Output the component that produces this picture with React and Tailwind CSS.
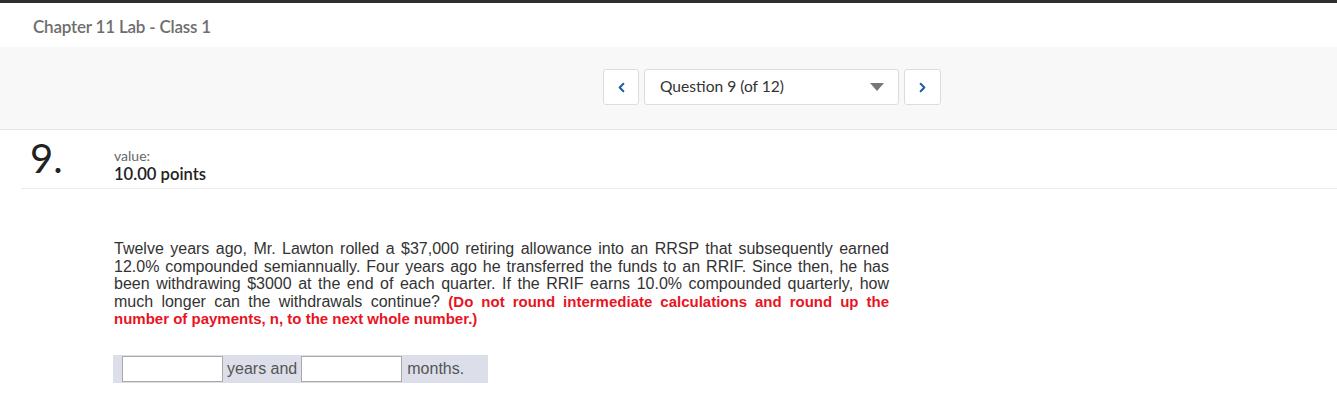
import { ChevronLeft, ChevronRight } from 'lucide-react';

function NavBar() {
  return (
    <div className="flex items-center gap-[5px] pl-[603px] pt-[22px]">
      <button className="flex h-[36px] w-[36px] items-center justify-center rounded-[3px] border border-[#dcdcdc] bg-white text-[#1f5ea8]">
        <ChevronLeft size={15} strokeWidth={3.2} />
      </button>
      <div className="flex h-[36px] w-[255px] items-center justify-between rounded-[3px] border border-[#dcdcdc] bg-white pl-[15px] pr-[14px]">
        <span className="text-[15.6px] text-[#333]">Question 9 (of 12)</span>
        <svg width="14" height="8" viewBox="0 0 14 8">
          <path d="M0 0 L14 0 L7 8 Z" fill="#777" />
        </svg>
      </div>
      <button className="flex h-[36px] w-[37px] items-center justify-center rounded-[3px] border border-[#dcdcdc] bg-white text-[#1f5ea8]">
        <ChevronRight size={15} strokeWidth={3.2} />
      </button>
    </div>
  );
}

export default function App() {
  return (
    <div className="min-h-[415px] bg-white font-['Lato',sans-serif]">
      <div className="h-[3px] bg-[#2e2e2e]" />
      <div className="flex h-[44px] items-center pl-[33px] pt-[4px]">
        <h1 className="text-[17px] font-semibold tracking-[-0.2px] text-[#6e6e6e]">Chapter 11 Lab - Class 1</h1>
      </div>
      <div className="h-[83px] border-b border-[#e3e3e3] bg-[#f8f8f8]">
        <NavBar />
      </div>

      {/* Question header */}
      <div className="ml-[21px] flex h-[59px] border-b border-[#ebebeb]">
        <div className="w-[93px] pl-[9px] pt-[8px] text-[40px] leading-[40px] text-[#222]">9.</div>
        <div className="pt-[18px]">
          <div className="text-[14px] leading-[16px] text-[#666]">value:</div>
          <div className="text-[16.6px] font-semibold leading-[20px] text-[#222]">10.00 points</div>
        </div>
      </div>

      {/* Question body */}
      <div className="pl-[113px] pt-[51px]">
        <p className="ml-[1px] w-[775px] text-justify font-['Liberation_Sans',Arial,sans-serif] text-[16px] leading-[17.6px] text-[#333]">
          Twelve years ago, Mr. Lawton rolled a $37,000 retiring allowance into an RRSP that subsequently earned 12.0%
          compounded semiannually. Four years ago he transferred the funds to an RRIF. Since then, he has been
          withdrawing $3000 at the end of each quarter. If the RRIF earns 10.0% compounded quarterly, how much longer
          can the withdrawals continue?{' '}
          <strong className="text-[15px] text-[#e8141f]">
            (Do not round intermediate calculations and round up the number of payments, n, to the next whole number.)
          </strong>
        </p>
        <div className="mt-[27px] flex h-[28px] w-[375px] items-center bg-[#dcdfe9] pl-[9px] font-['Liberation_Sans',Arial,sans-serif] text-[16px] text-[#555]">
          <input className="h-[26px] w-[101px] border border-[#a9a9a9] bg-white" />
          <span className="px-[4px]">years and</span>
          <input className="h-[26px] w-[101px] border border-[#a9a9a9] bg-white" />
          <span className="px-[5px]">months.</span>
        </div>
      </div>
    </div>
  );
}
